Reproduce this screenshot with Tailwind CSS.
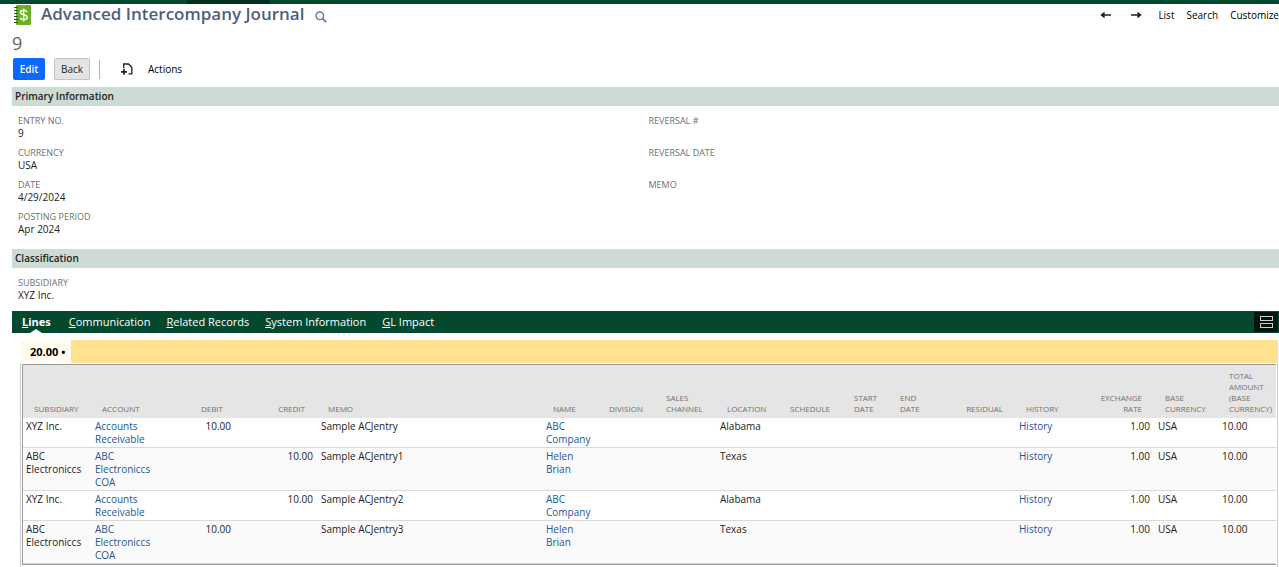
<!DOCTYPE html>
<html lang="en">
  <head>
    <meta charset="UTF-8" />
    <meta name="viewport" content="width=device-width, initial-scale=1.0" />
    <title>Advanced Intercompany Journal</title>
    <script src="https://cdn.jsdelivr.net/npm/@tailwindcss/browser@4"></script>
  </head>
  <body class="bg-white font-['Open_Sans',sans-serif] text-[10px] leading-[13px] text-[#222222] overflow-x-hidden">
    <!-- Main menu strip -->
    <div class="h-1 bg-[#04482e] flex">
      <div class="ml-[187px] w-[83px] bg-[#02301f]"></div>
    </div>

    <!-- Page title -->
    <header class="pl-3">
      <div class="flex items-center h-[22px]">
        <svg class="w-5 h-5 shrink-0" viewBox="0 0 20 20" aria-hidden="true">
          <rect x="4" y="0" width="15" height="20" rx="1" fill="#6cb02a" />
          <g fill="#444444">
            <rect x="2" y="2" width="4" height="1" />
            <rect x="2" y="5" width="4" height="1" />
            <rect x="2" y="8" width="4" height="1" />
            <rect x="2" y="11" width="4" height="1" />
            <rect x="2" y="14" width="4" height="1" />
            <rect x="2" y="17" width="4" height="1" />
          </g>
          <path d="M15 6.8C14.4 5.6 13.2 5.2 11.7 5.2C9.8 5.2 8.4 6 8.4 7.5C8.4 10.6 15.2 8.9 15.2 12.2C15.2 13.8 13.7 14.6 11.8 14.6C10 14.6 8.7 14 8.1 12.8M11.7 3.4V16.4" fill="none" stroke="#eef8e0" stroke-width="1.5" />
        </svg>
        <h1 class="self-start ml-[9px] text-[17px] leading-5 font-semibold text-[#4d5f7f]">Advanced Intercompany Journal</h1>
        <button type="button" aria-label="Search records" class="ml-[11px] mt-1">
          <svg class="w-3 h-3" viewBox="0 0 12 12" fill="none" stroke="#5d79a3">
            <circle cx="4.8" cy="4.8" r="3.8" stroke-width="1.4" />
            <path d="M7.6 7.6L11.2 11.2" stroke-width="1.8" />
          </svg>
        </button>
        <nav class="ml-auto flex items-center gap-3 text-black">
          <a href="#" aria-label="Previous" class="mr-1.5">
            <svg class="w-3 h-3" viewBox="0 0 12 12" fill="none" stroke="#222222" stroke-width="1.4">
              <path d="M1.5 6H11M4.5 3.5L1.5 6L4.5 8.5" />
              <path d="M1 6L4.5 3.5V8.5Z" fill="#222222" stroke="none" />
            </svg>
          </a>
          <a href="#" aria-label="Next">
            <svg class="w-3 h-3" viewBox="0 0 12 12" fill="none" stroke="#222222" stroke-width="1.4">
              <path d="M1 6H10.5M7.5 3.5L10.5 6L7.5 8.5" />
              <path d="M11 6L7.5 3.5V8.5Z" fill="#222222" stroke="none" />
            </svg>
          </a>
          <a href="#" class="ml-1">List</a>
          <a href="#">Search</a>
          <a href="#">Customize</a>
        </nav>
      </div>
      <p class="mt-1.5 text-[18px] leading-[22px] text-[#666666]">9</p>

      <!-- Record buttons -->
      <div class="mt-1 flex items-center h-[22px]">
        <button type="button" class="ml-px h-[22px] w-8 rounded-xs bg-[#0a69ff] text-white font-semibold">Edit</button>
        <button type="button" class="ml-[9px] h-[22px] w-9 rounded-xs border border-[#c4c4c4] bg-[#e4e4e4] font-medium">Back</button>
        <div class="ml-[9px] h-[19px] w-px bg-[#b3b3b3]"></div>
        <button type="button" aria-label="New" class="ml-[21px]">
          <svg class="w-3 h-3" viewBox="0 0 12 12" fill="none" stroke="#222222" stroke-width="1.3">
            <path d="M2.7 5V1H7.5L10.8 4.3V10.8H7.5" />
            <path d="M0 8.8H6M3 5.8V11.8" stroke-width="1.7" />
          </svg>
        </button>
        <button type="button" class="ml-[15px] text-black">Actions</button>
      </div>
    </header>

    <main class="pl-3">
      <!-- Primary information -->
      <section>
        <h2 class="mt-[7px] h-[19px] pl-[3px] leading-[19px] font-semibold text-[#222222] bg-[#ccdbd3]">Primary Information</h2>
        <div class="grid grid-cols-2 pl-1.5 pt-2 pb-[13px]">
          <dl class="space-y-1.5">
            <div>
              <dt class="text-[9px] text-[#6f6f6f]">ENTRY NO.</dt>
              <dd>9</dd>
            </div>
            <div>
              <dt class="text-[9px] text-[#6f6f6f]">CURRENCY</dt>
              <dd>USA</dd>
            </div>
            <div>
              <dt class="text-[9px] text-[#6f6f6f]">DATE</dt>
              <dd>4/29/2024</dd>
            </div>
            <div>
              <dt class="text-[9px] text-[#6f6f6f]">POSTING PERIOD</dt>
              <dd>Apr 2024</dd>
            </div>
          </dl>
          <dl class="space-y-1.5">
            <div>
              <dt class="text-[9px] text-[#6f6f6f]">REVERSAL #</dt>
              <dd class="h-[13px]"></dd>
            </div>
            <div>
              <dt class="text-[9px] text-[#6f6f6f]">REVERSAL DATE</dt>
              <dd class="h-[13px]"></dd>
            </div>
            <div>
              <dt class="text-[9px] text-[#6f6f6f]">MEMO</dt>
              <dd class="h-[13px]"></dd>
            </div>
          </dl>
        </div>
      </section>

      <!-- Classification -->
      <section>
        <h2 class="h-[19px] pl-[3px] leading-[19px] font-semibold text-[#222222] bg-[#ccdbd3]">Classification</h2>
        <dl class="pl-1.5 pt-2 pb-[9px]">
          <dt class="text-[9px] text-[#6f6f6f]">SUBSIDIARY</dt>
          <dd>XYZ Inc.</dd>
        </dl>
      </section>

      <!-- Subtabs -->
      <nav class="flex items-center h-[22px] pl-2.5 pr-px gap-4 bg-[#04482e] text-white text-[11px] leading-[22px]">
        <a href="#" class="relative mr-0.5 font-bold"><u>L</u>ines
          <svg class="absolute left-1/2 -translate-x-1/2 bottom-0 w-3 h-1" viewBox="0 0 12 4" aria-hidden="true"><path d="M0 4L6 0L12 4Z" fill="#ffffff" /></svg>
        </a>
        <a href="#"><u>C</u>ommunication</a>
        <a href="#"><u>R</u>elated Records</a>
        <a href="#"><u>S</u>ystem Information</a>
        <a href="#"><u>G</u>L Impact</a>
        <button type="button" aria-label="Show unlayered view" class="ml-auto flex items-center justify-center w-6 h-5 rounded-xs bg-[#01140d]">
          <svg class="w-[13px] h-3" viewBox="0 0 13 12" fill="none" stroke="#cccccc">
            <rect x="0.5" y="0.5" width="12" height="4" />
            <rect x="0.5" y="7.5" width="12" height="4" />
          </svg>
        </button>
      </nav>

      <!-- Journal lines -->
      <section class="mt-[7px] ml-2 mr-px">
        <div class="flex h-[23px] bg-[#ffe190]">
          <a href="#" class="relative w-[51px] pl-2.5 bg-[#fffbee] text-[11px] leading-6 font-bold text-black whitespace-nowrap">20.00 •
            <svg class="absolute left-5 bottom-0 w-3 h-1" viewBox="0 0 12 4" aria-hidden="true"><path d="M0 4L6 0L12 4Z" fill="#ffffff" /></svg>
          </a>
        </div>
        <div class="pt-px px-px pb-4 border-x border-[#cccccc]">
          <table class="w-full table-fixed border-separate border-spacing-0 border border-[#999999] border-r-0">
            <colgroup>
              <col class="w-[68px]" />
              <col class="w-[61px]" />
              <col class="w-[83px]" />
              <col class="w-[82px]" />
              <col />
              <col class="w-[56px]" />
              <col class="w-[57px]" />
              <col class="w-[61px]" />
              <col class="w-[63px]" />
              <col class="w-[64px]" />
              <col class="w-[46px]" />
              <col class="w-[44px]" />
              <col class="w-[82px]" />
              <col class="w-[57px]" />
              <col class="w-[82px]" />
              <col class="w-[64px]" />
              <col class="w-[58px]" />
            </colgroup>
            <thead class="bg-[#e5e5e5] text-[8px] leading-[11px] text-[#6f6f6f] text-left align-bottom [&_th]:font-normal [&_th]:pl-[11px] [&_th]:pt-[5px] [&_th]:pb-1">
              <tr>
                <th scope="col">SUBSIDIARY</th>
                <th scope="col">ACCOUNT</th>
                <th scope="col" class="pr-3 text-right">DEBIT</th>
                <th scope="col" class="pr-3 text-right">CREDIT</th>
                <th scope="col">MEMO</th>
                <th scope="col">NAME</th>
                <th scope="col">DIVISION</th>
                <th scope="col">SALES<br />CHANNEL</th>
                <th scope="col">LOCATION</th>
                <th scope="col">SCHEDULE</th>
                <th scope="col">START<br />DATE</th>
                <th scope="col">END<br />DATE</th>
                <th scope="col" class="pr-3 text-right">RESIDUAL</th>
                <th scope="col">HISTORY</th>
                <th scope="col" class="pr-3 text-right">EXCHANGE<br />RATE</th>
                <th scope="col">BASE<br />CURRENCY</th>
                <th scope="col">TOTAL<br />AMOUNT<br />(BASE<br />CURRENCY)</th>
              </tr>
            </thead>
            <tbody class="align-top [&_td]:px-1 [&_td:first-child]:pl-[3px] [&_td]:pt-0.5 [&_td]:pb-px [&_td]:border-b [&_td]:border-[#d9d9d9] [&_a]:text-[#255599]">
              <tr>
                <td>XYZ Inc.</td>
                <td><a href="#">Accounts<br />Receivable</a></td>
                <td class="text-right">10.00</td>
                <td></td>
                <td>Sample ACJentry</td>
                <td><a href="#">ABC<br />Company</a></td>
                <td></td>
                <td></td>
                <td>Alabama</td>
                <td></td>
                <td></td>
                <td></td>
                <td></td>
                <td><a href="#">History</a></td>
                <td class="text-right">1.00</td>
                <td>USA</td>
                <td>10.00</td>
              </tr>
              <tr class="bg-[#fafafa]">
                <td>ABC<br />Electroniccs</td>
                <td><a href="#">ABC<br />Electroniccs<br />COA</a></td>
                <td></td>
                <td class="text-right">10.00</td>
                <td>Sample ACJentry1</td>
                <td><a href="#">Helen<br />Brian</a></td>
                <td></td>
                <td></td>
                <td>Texas</td>
                <td></td>
                <td></td>
                <td></td>
                <td></td>
                <td><a href="#">History</a></td>
                <td class="text-right">1.00</td>
                <td>USA</td>
                <td>10.00</td>
              </tr>
              <tr>
                <td>XYZ Inc.</td>
                <td><a href="#">Accounts<br />Receivable</a></td>
                <td></td>
                <td class="text-right">10.00</td>
                <td>Sample ACJentry2</td>
                <td><a href="#">ABC<br />Company</a></td>
                <td></td>
                <td></td>
                <td>Alabama</td>
                <td></td>
                <td></td>
                <td></td>
                <td></td>
                <td><a href="#">History</a></td>
                <td class="text-right">1.00</td>
                <td>USA</td>
                <td>10.00</td>
              </tr>
              <tr class="bg-[#fafafa]">
                <td>ABC<br />Electroniccs</td>
                <td><a href="#">ABC<br />Electroniccs<br />COA</a></td>
                <td class="text-right">10.00</td>
                <td></td>
                <td>Sample ACJentry3</td>
                <td><a href="#">Helen<br />Brian</a></td>
                <td></td>
                <td></td>
                <td>Texas</td>
                <td></td>
                <td></td>
                <td></td>
                <td></td>
                <td><a href="#">History</a></td>
                <td class="text-right">1.00</td>
                <td>USA</td>
                <td>10.00</td>
              </tr>
            </tbody>
          </table>
        </div>
      </section>
    </main>
  </body>
</html>
